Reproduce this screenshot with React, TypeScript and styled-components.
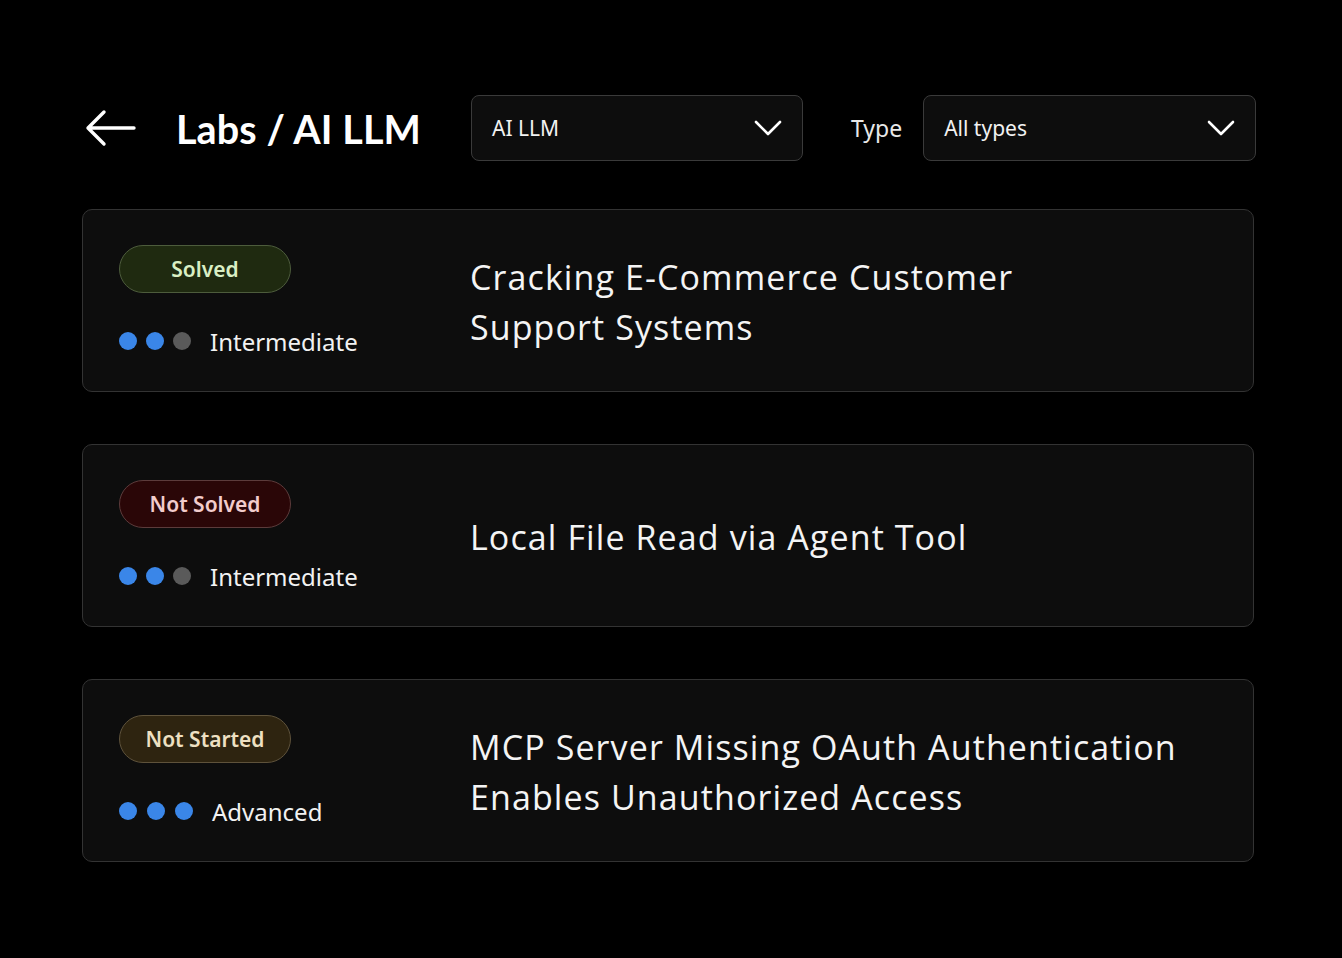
import React from "react";
import styled, { createGlobalStyle } from "styled-components";

const Global = createGlobalStyle`
  html, body { margin: 0; padding: 0; background: #000; }
  body { font-family: "Noto Sans", "Liberation Sans", sans-serif; color: #fff; }
`;

const Page = styled.div`
  width: 1342px;
  min-height: 958px;
  background: #000;
  box-sizing: border-box;
  padding: 95px 88px 0 82px;
  display: flex;
  flex-direction: column;
`;

const Header = styled.div`
  display: flex;
  align-items: center;
  height: 66px;
  margin: 0 -2px 48px 0;
`;

const BackButton = styled.button`
  background: none;
  border: none;
  padding: 0;
  margin: 0 39px 0 3px;
  width: 52px;
  height: 40px;
  display: flex;
  align-items: center;
  cursor: pointer;
`;

const Title = styled.h1`
  margin: 0 50px 0 0;
  font-family: "Lato", "Noto Sans", sans-serif;
  font-weight: 700;
  font-size: 39.5px;
  letter-spacing: 0.1px;
  color: #fff;
  white-space: nowrap;
`;

const Select = styled.div<{ $w: number }>`
  width: ${(p) => p.$w}px;
  height: 66px;
  box-sizing: border-box;
  border: 1px solid #3a3a3a;
  border-radius: 8px;
  background: #0d0d0d;
  display: flex;
  align-items: center;
  justify-content: space-between;
  padding: 0 20px 0 20px;
  font-size: 21px;
  color: #f2f2f2;
`;

const Label = styled.span`
  font-size: 23px;
  color: #e8e8e8;
  margin: 0 21px 0 48px;
`;

const List = styled.div`
  display: flex;
  flex-direction: column;
  gap: 52px;
`;

const Card = styled.div`
  height: 183px;
  box-sizing: border-box;
  border: 1px solid #333;
  border-radius: 10px;
  background: #0d0d0d;
  display: flex;
  align-items: center;
  padding: 0 36px;
`;

const Left = styled.div`
  width: 351px;
  flex-shrink: 0;
  display: flex;
  flex-direction: column;
  gap: 33px;
`;

const tones = {
  solved: { bg: "#1f2a10", border: "#4d5c3c", color: "#d9efc4" },
  failed: { bg: "#2a0607", border: "#5c3b3b", color: "#f2cccc" },
  pending: { bg: "#2e2410", border: "#5e523b", color: "#eee0c2" },
};

type Tone = keyof typeof tones;

const Badge = styled.div<{ $tone: Tone }>`
  width: 172px;
  height: 48px;
  box-sizing: border-box;
  border-radius: 24px;
  border: 1.5px solid ${(p) => tones[p.$tone].border};
  background: ${(p) => tones[p.$tone].bg};
  color: ${(p) => tones[p.$tone].color};
  display: flex;
  align-items: center;
  justify-content: center;
  font-size: 21px;
  font-weight: 600;
`;

const Level = styled.div`
  display: flex;
  align-items: center;
  height: 30px;
`;

const Dots = styled.div<{ $gap: number }>`
  display: flex;
  gap: ${(p) => p.$gap}px;
  margin-right: 19px;
`;

const Dot = styled.span<{ $on: boolean }>`
  width: 18px;
  height: 18px;
  border-radius: 50%;
  background: ${(p) => (p.$on ? "#3a86e8" : "#5a5a5a")};
`;

const LevelText = styled.span`
  font-size: 24px;
  color: #f2f2f2;
`;

const LabTitle = styled.div`
  font-family: "Open Sans", "Noto Sans", sans-serif;
  font-size: 34px;
  line-height: 50px;
  letter-spacing: 1.1px;
  color: #f4f4f4;
  margin-top: 2px;
`;

const Chevron = () => (
  <svg width="28" height="20" viewBox="0 0 28 20" fill="none">
    <path d="M2 4 L14 16 L26 4" stroke="#fff" strokeWidth="2.6" strokeLinecap="round" strokeLinejoin="round" />
  </svg>
);

const labs: { status: string; tone: Tone; level: number; levelName: string; title: string[] }[] = [
  { status: "Solved", tone: "solved", level: 2, levelName: "Intermediate", title: ["Cracking E-Commerce Customer", "Support Systems"] },
  { status: "Not Solved", tone: "failed", level: 2, levelName: "Intermediate", title: ["Local File Read via Agent Tool"] },
  { status: "Not Started", tone: "pending", level: 3, levelName: "Advanced", title: ["MCP Server Missing OAuth Authentication", "Enables Unauthorized Access"] },
];

export default function App() {
  return (
    <>
      <Global />
      <Page>
        <Header>
          <BackButton aria-label="Back">
            <svg width="52" height="40" viewBox="0 0 52 40" fill="none">
              <path d="M3 20 H49 M19 4 L3 20 L19 36" stroke="#fff" strokeWidth="3.4" strokeLinecap="round" strokeLinejoin="round" />
            </svg>
          </BackButton>
          <Title>Labs / AI LLM</Title>
          <Select $w={332}>
            <span>AI LLM</span>
            <Chevron />
          </Select>
          <Label>Type</Label>
          <Select $w={333}>
            <span>All types</span>
            <Chevron />
          </Select>
        </Header>
        <List>
          {labs.map((lab) => (
            <Card key={lab.status}>
              <Left>
                <Badge $tone={lab.tone}>{lab.status}</Badge>
                <Level>
                  <Dots $gap={lab.level === 3 ? 10 : 9}>
                    {[0, 1, 2].map((i) => (
                      <Dot key={i} $on={i < lab.level} />
                    ))}
                  </Dots>
                  <LevelText>{lab.levelName}</LevelText>
                </Level>
              </Left>
              <LabTitle>
                {lab.title.map((t) => (
                  <div key={t}>{t}</div>
                ))}
              </LabTitle>
            </Card>
          ))}
        </List>
      </Page>
    </>
  );
}
